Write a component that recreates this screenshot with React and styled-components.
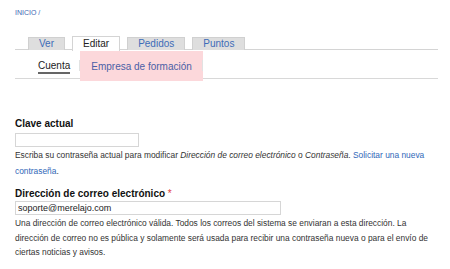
import React from "react";
import styled, { createGlobalStyle } from "styled-components";

const GlobalStyle = createGlobalStyle`
  html, body {
    margin: 0;
    padding: 0;
    background: #fff;
  }
  body {
    font-family: "Liberation Sans", Arial, sans-serif;
    color: #333;
  }
`;

const Page = styled.div`
  width: 425px;
  padding: 0 10px 0 15px;
`;

const Breadcrumb = styled.div`
  margin-top: 8px;
  font-size: 7px;
  line-height: 10px;
  color: #3a66b3;
`;

const Tabs = styled.ul`
  display: flex;
  gap: 7px;
  list-style: none;
  margin: 18px 0 0;
  padding: 0 0 0 13px;
  height: 13px;
  width: 410px;
  border-bottom: 1px solid #d4d4d4;
`;

const Tab = styled.li`
  padding: 0 10px;
  height: ${(p) => (p.$active ? "14px" : "12px")};
  margin-top: ${(p) => (p.$active ? "0" : "1px")};
  font-size: 10px;
  line-height: ${(p) => (p.$active ? "13px" : "12px")};
  color: ${(p) => (p.$active ? "#222" : "#3d6cb8")};
  background: ${(p) => (p.$active ? "#fff" : "#dedede")};
  border: 1px solid ${(p) => (p.$active ? "#d4d4d4" : "#d0d0d0")};
  border-bottom: none;
`;

const SubTabs = styled.ul`
  display: flex;
  list-style: none;
  margin: 0;
  padding: 0 0 0 13px;
  height: 28px;
  width: 410px;
  border-bottom: 1px solid #d8d8d8;
`;

const SubTab = styled.li`
  position: relative;
  display: flex;
  align-items: center;
  align-self: flex-start;
  height: 30px;
  margin-top: 1px;
  padding: ${(p) => (p.$highlight ? "0 11px 0 11px" : "0 10px")};
  font-size: 10px;
  color: ${(p) => (p.$highlight ? "#4b5fa6" : "#222")};
  background: ${(p) => (p.$highlight ? "#fcd8db" : "transparent")};

  &::after {
    content: "";
    position: absolute;
    right: 0;
    top: 9px;
    width: 1px;
    height: 11px;
    background: #e2e2e2;
  }
`;

const Underlined = styled.span`
  line-height: 12px;
  margin-top: 2px;
  border-bottom: 2px solid #666;
`;

const Form = styled.form`
  margin-top: 39px;
`;

const Label = styled.label`
  display: block;
  font-size: 10px;
  font-weight: bold;
  line-height: 12px;
  color: #111;
  margin-top: ${(p) => p.$top || "0"};
`;

const Required = styled.span`
  color: #e2403f;
  font-weight: normal;
`;

const Input = styled.input`
  display: block;
  box-sizing: border-box;
  width: ${(p) => p.$width};
  height: 14px;
  margin: ${(p) => p.$gap} 0 0;
  padding: 0 2px;
  border: 1px solid #d6d6d6;
  font-family: "Liberation Sans", Arial, sans-serif;
  font-size: 9px;
  color: #222;
  outline: none;
`;

const Help = styled.div`
  font-size: 8.4px;
  line-height: ${(p) => p.$lh};
  color: #333;
  margin-top: ${(p) => p.$top || "0"};

  a {
    color: #2f67b8;
    text-decoration: none;
  }
`;

export default function App() {
  return (
    <>
      <GlobalStyle />
      <Page>
        <Breadcrumb>INICIO /</Breadcrumb>
        <Tabs>
          <Tab>Ver</Tab>
          <Tab $active>Editar</Tab>
          <Tab>Pedidos</Tab>
          <Tab>Puntos</Tab>
        </Tabs>
        <SubTabs>
          <SubTab>
            <Underlined>Cuenta</Underlined>
          </SubTab>
          <SubTab $highlight>Empresa de formación</SubTab>
        </SubTabs>
        <Form>
          <Label>Clave actual</Label>
          <Input type="password" $width="124px" $gap="3px" />
          <Help $lh="16px">
            Escriba su contraseña actual para modificar <em>Dirección de correo electrónico</em> o{" "}
            <em>Contraseña</em>. <a href="#">Solicitar una nueva contraseña</a>.
          </Help>
          <Label $top="9px">
            Dirección de correo electrónico <Required>*</Required>
          </Label>
          <Input type="text" defaultValue="soporte@merelajo.com" $width="266px" $gap="1px" />
          <Help $lh="14.5px" $top="1px">
            Una dirección de correo electrónico válida. Todos los correos del sistema se enviaran a
            esta dirección. La dirección de correo no es pública y solamente será usada para recibir
            una contraseña nueva o para el envío de ciertas noticias y avisos.
          </Help>
        </Form>
      </Page>
    </>
  );
}
